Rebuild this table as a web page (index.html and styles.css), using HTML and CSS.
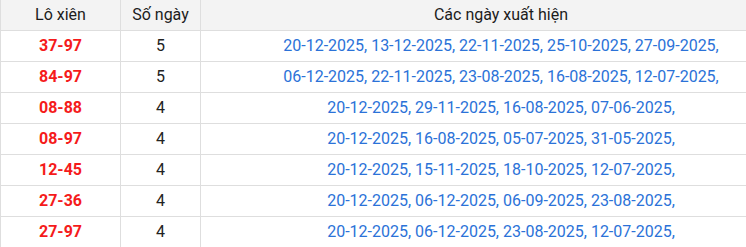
FILE: index.html
```html
<!DOCTYPE html>
<html lang="vi">
<head>
<meta charset="utf-8">
<link rel="stylesheet" href="styles.css">
</head>
<body>
<table class="lx">
  <colgroup><col class="c1"><col class="c2"><col class="c3"></colgroup>
  <thead>
    <tr><th>Lô xiên</th><th>Số ngày</th><th>Các ngày xuất hiện</th></tr>
  </thead>
  <tbody>
    <tr><td class="pair">37-97</td><td>5</td><td class="dates">20-12-2025, 13-12-2025, 22-11-2025, 25-10-2025, 27-09-2025,</td></tr>
    <tr><td class="pair">84-97</td><td>5</td><td class="dates">06-12-2025, 22-11-2025, 23-08-2025, 16-08-2025, 12-07-2025,</td></tr>
    <tr><td class="pair">08-88</td><td>4</td><td class="dates">20-12-2025, 29-11-2025, 16-08-2025, 07-06-2025,</td></tr>
    <tr><td class="pair">08-97</td><td>4</td><td class="dates">20-12-2025, 16-08-2025, 05-07-2025, 31-05-2025,</td></tr>
    <tr><td class="pair">12-45</td><td>4</td><td class="dates">20-12-2025, 15-11-2025, 18-10-2025, 12-07-2025,</td></tr>
    <tr><td class="pair">27-36</td><td>4</td><td class="dates">20-12-2025, 06-12-2025, 06-09-2025, 23-08-2025,</td></tr>
    <tr><td class="pair">27-97</td><td>4</td><td class="dates">20-12-2025, 06-12-2025, 23-08-2025, 12-07-2025,</td></tr>
  </tbody>
</table>
</body>
</html>
```
FILE: styles.css
```css
html, body {
  margin: 0;
  padding: 0;
  background: #fff;
  overflow: hidden;
}
.lx {
  border-collapse: collapse;
  table-layout: fixed;
  width: 801px;
  font-family: Roboto, "Liberation Sans", sans-serif;
  font-size: 16px;
  color: #222;
}
.c1 { width: 120px; }
.c2 { width: 80px; }
.c3 { width: 601px; }
.lx th, .lx td {
  border: 1px solid #dedede;
  text-align: center;
  padding: 0;
  height: 30px;
  line-height: 30px;
  white-space: nowrap;
}
.lx tr:first-child th { border-top: none; }
.lx th {
  background: #f3f3f3;
  font-weight: 400;
  color: #1c1c1c;
}
.lx td.pair {
  color: #f51b1b;
  font-weight: 700;
}
.lx td.dates {
  color: #2b72d8;
}
```
